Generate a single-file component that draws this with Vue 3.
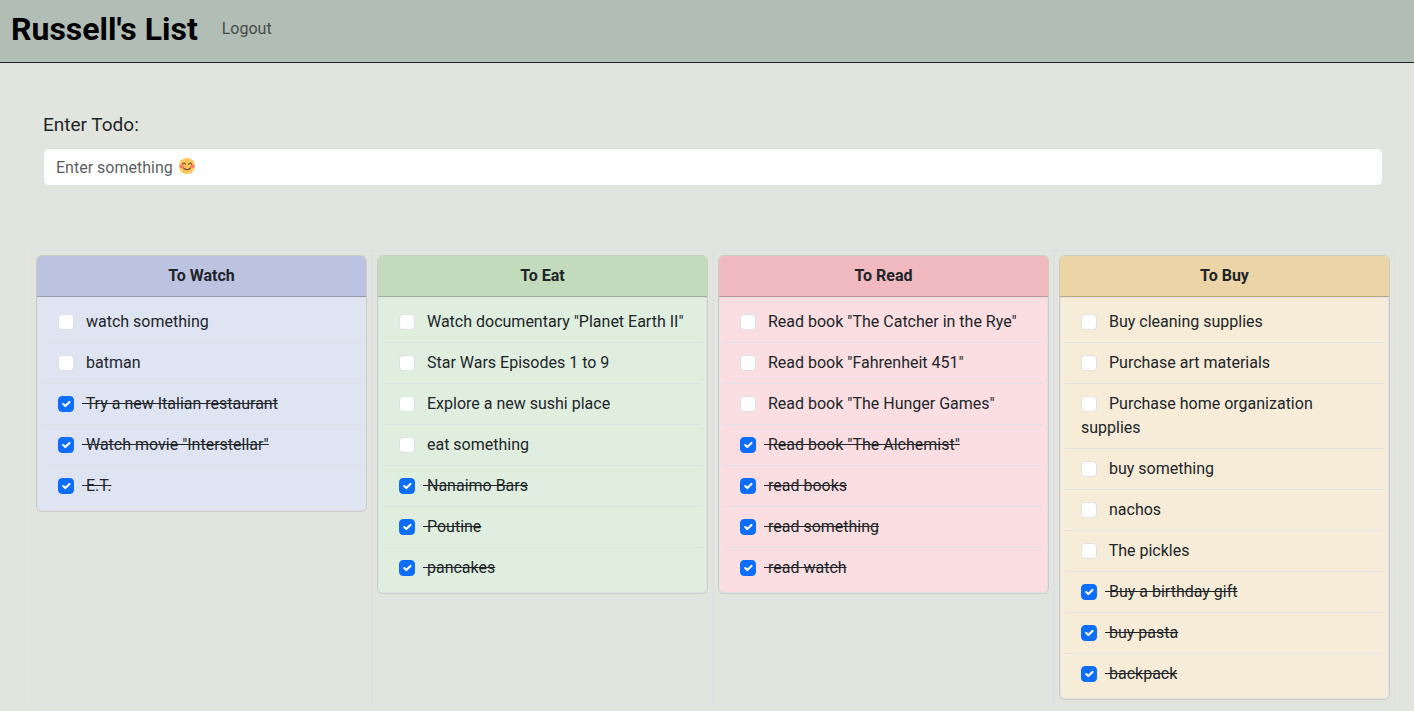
<script setup>
import { reactive, ref } from 'vue'

const entry = ref('')

const make = (open, done) => [
  ...open.map((text) => ({ text, done: false })),
  ...done.map((text) => ({ text, done: true })),
]

const lists = reactive([
  {
    key: 'watch',
    title: 'To Watch',
    items: make(
      ['watch something', 'batman'],
      ['Try a new Italian restaurant', 'Watch movie "Interstellar"', 'E.T.']
    ),
  },
  {
    key: 'eat',
    title: 'To Eat',
    items: make(
      ['Watch documentary "Planet Earth II"', 'Star Wars Episodes 1 to 9', 'Explore a new sushi place', 'eat something'],
      ['Nanaimo Bars', 'Poutine', 'pancakes']
    ),
  },
  {
    key: 'read',
    title: 'To Read',
    items: make(
      ['Read book "The Catcher in the Rye"', 'Read book "Fahrenheit 451"', 'Read book "The Hunger Games"'],
      ['Read book "The Alchemist"', 'read books', 'read something', 'read watch']
    ),
  },
  {
    key: 'buy',
    title: 'To Buy',
    items: make(
      ['Buy cleaning supplies', 'Purchase art materials', 'Purchase home organization supplies', 'buy something', 'nachos', 'The pickles'],
      ['Buy a birthday gift', 'buy pasta', 'backpack']
    ),
  },
])
</script>

<template>
  <div class="page">
    <header class="bar">
      <h1>Russell's List</h1>
      <a href="#logout">Logout</a>
    </header>
    <main>
      <form class="entry" @submit.prevent>
        <label for="todo">Enter Todo:</label>
        <div class="field">
          <input id="todo" v-model="entry" type="text" placeholder="Enter something" />
          <svg v-if="!entry" class="smile" viewBox="0 0 18 18" aria-hidden="true">
            <circle cx="9" cy="9" r="8" fill="#ffc55c" />
            <ellipse cx="3.6" cy="9.4" rx="2" ry="1.6" fill="#ff7272" />
            <ellipse cx="14.4" cy="9.4" rx="2" ry="1.6" fill="#ff7272" />
            <g fill="none" stroke="#6b4d33" stroke-width="1.1" stroke-linecap="round">
              <path d="M4.4 7.2q1.5-2.4 3 0" />
              <path d="M10.6 7.2q1.5-2.4 3 0" />
              <path d="M5.5 11q3.5 3.4 7 0" />
            </g>
          </svg>
        </div>
      </form>
      <div class="board">
        <div v-for="list in lists" :key="list.key" class="cell">
          <section class="card" :class="list.key">
            <h2>{{ list.title }}</h2>
            <ul>
              <li v-for="item in list.items" :key="item.text">
                <label>
                  <input v-model="item.done" type="checkbox" />
                  <span :class="{ done: item.done }">{{ ' ' + item.text }}</span>
                </label>
              </li>
            </ul>
          </section>
        </div>
      </div>
    </main>
  </div>
</template>

<style>
body {
  margin: 0;
  background: #e2e5de;
}
</style>

<style scoped>
* {
  box-sizing: border-box;
}

.page {
  font: 400 16px/24px Roboto, sans-serif;
  color: #212529;
}

.bar {
  display: flex;
  align-items: flex-start;
  gap: 24px;
  padding: 9px 11px 13px;
  background: #b2bdb5;
  border-bottom: 1px solid #212529;
}

h1 {
  margin: 0;
  font-size: 32px;
  line-height: 40px;
  font-weight: 700;
  color: #000;
}

.bar a {
  padding-top: 8px;
  color: #464b48;
  text-decoration: none;
}

main {
  padding: 48px 19px 0 31px;
}

.entry {
  padding: 0 12px;
}

.entry label {
  display: block;
  margin-bottom: 10px;
  font-size: 19px;
  line-height: 27px;
}

.field {
  position: relative;
}

.entry input {
  display: block;
  width: 100%;
  height: 38px;
  padding: 6px 12px;
  font: inherit;
  color: inherit;
  background: #fff;
  border: 1px solid #dee2e6;
  border-radius: 6px;
}

.entry input::placeholder {
  color: rgba(33, 37, 41, 0.75);
  opacity: 1;
}

.smile {
  position: absolute;
  left: 135px;
  top: 9px;
  width: 18px;
  height: 18px;
  pointer-events: none;
}

.board {
  display: grid;
  grid-template-columns: repeat(4, minmax(0, 1fr));
  margin: 64px 0 6px;
}

.cell {
  padding: 4px;
  border: 1px solid #dee0e6;
}

.card {
  border: 1px solid rgba(0, 0, 0, 0.1);
  border-radius: 6px;
  overflow: hidden;
}

h2 {
  margin: 0;
  padding: 8px 16px;
  font-size: 16px;
  line-height: 24px;
  font-weight: 700;
  text-align: center;
  border-bottom: 1px solid rgba(0, 0, 0, 0.2);
}

ul {
  margin: 0;
  padding: 4px;
  list-style: none;
  border: 1px solid #dee2e6;
  border-radius: 0 0 5px 5px;
}

li {
  padding: 8px 16px;
  border-bottom: 1px solid #dee2e6;
}

li:last-child {
  border-bottom: 0;
}

li input {
  appearance: none;
  width: 16px;
  height: 16px;
  margin: 4px 8px 0 0;
  vertical-align: top;
  background: #fff center / contain no-repeat;
  border: 1px solid #dee2e6;
  border-radius: 4px;
}

li input:checked {
  background-color: #0d6efd;
  border-color: #0d6efd;
  background-image: url("data:image/svg+xml,%3csvg xmlns='http://www.w3.org/2000/svg' viewBox='0 0 20 20'%3e%3cpath fill='none' stroke='%23fff' stroke-linecap='round' stroke-linejoin='round' stroke-width='3' d='m6 10 3 3 6-6'/%3e%3c/svg%3e");
}

.done {
  text-decoration: line-through;
}

.card { background-clip: padding-box; }
.watch { background-color: #dee4f2; }
.watch h2 { background: #bcc3e1; }
.eat { background-color: #e0eedf; }
.eat h2 { background: #c2dbbc; }
.read { background-color: #fadee1; }
.read h2 { background: #efb9bf; }
.buy { background-color: #f6ecd7; }
.buy h2 { background: #ebd5a7; }
</style>
